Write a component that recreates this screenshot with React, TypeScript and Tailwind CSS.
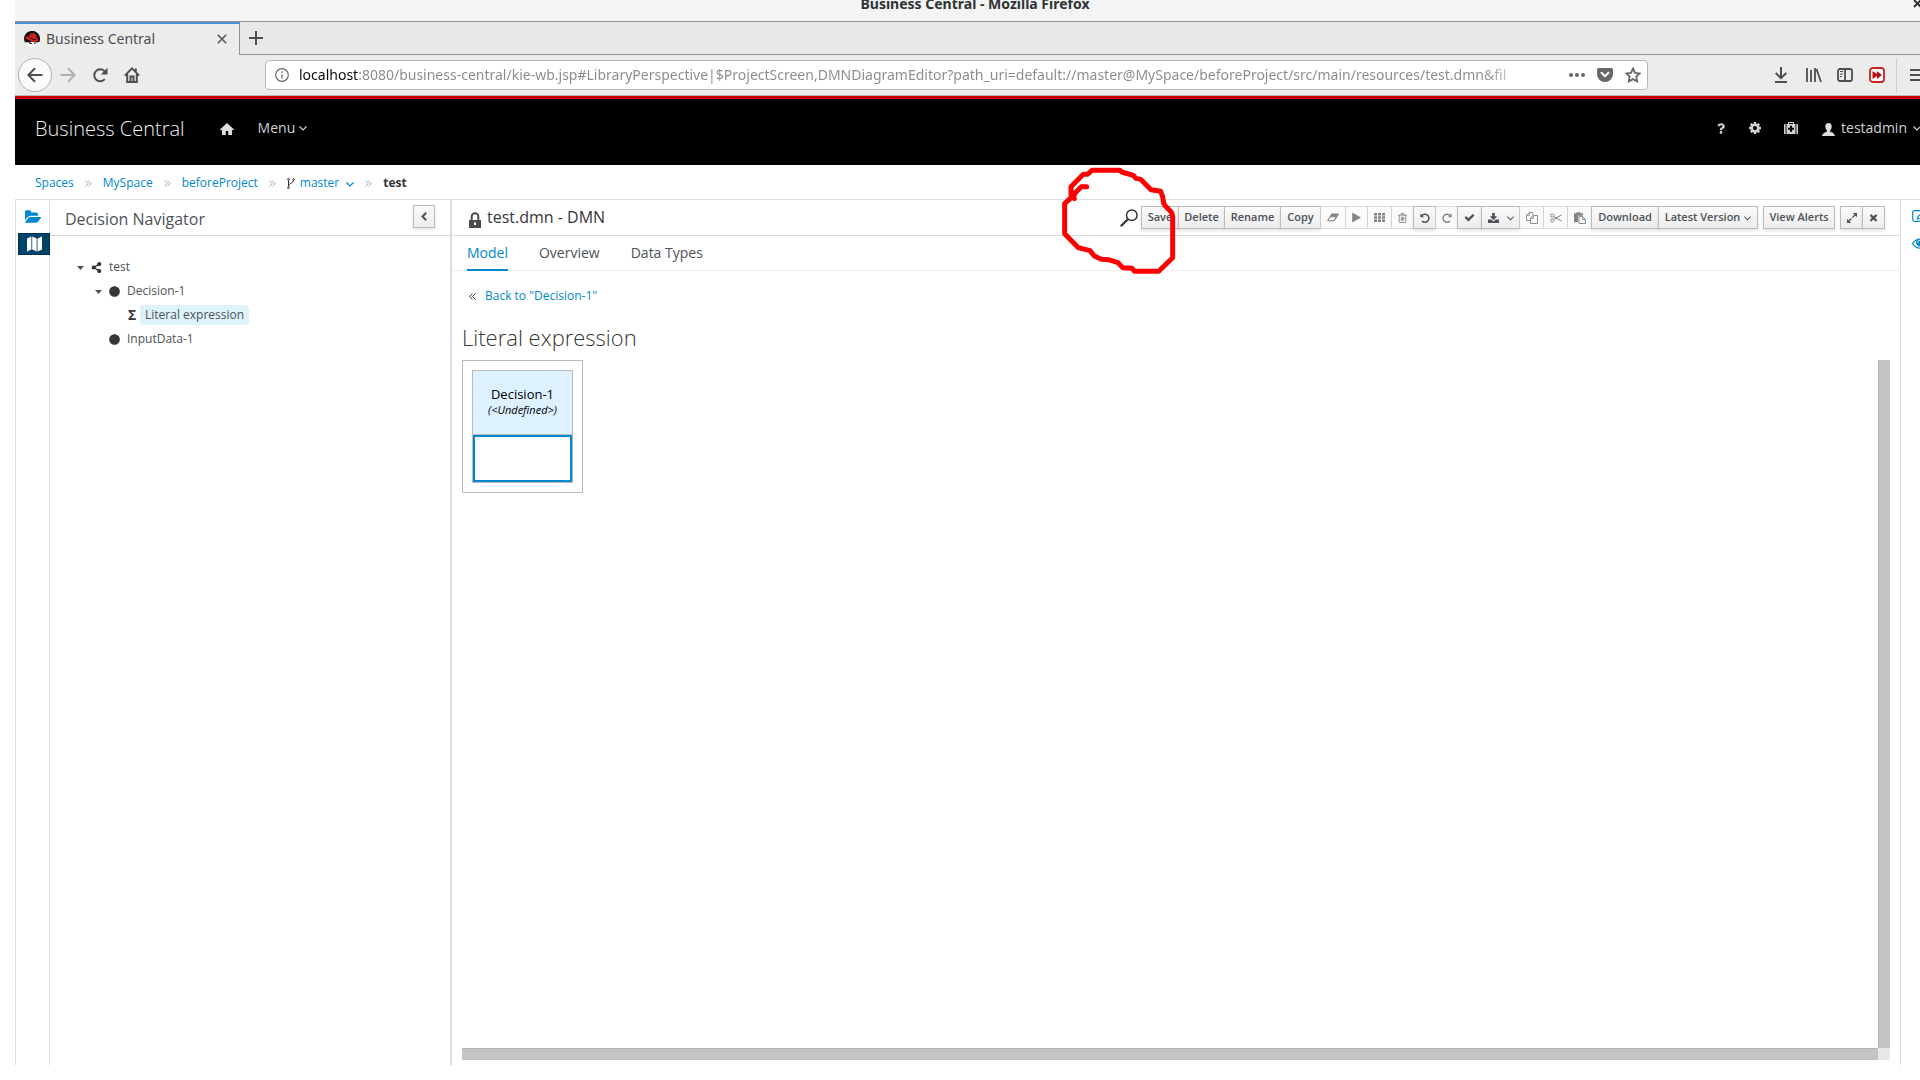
import type { ReactNode } from "react";
import { FaCircle, FaQuestion, FaShareAlt } from "react-icons/fa";

type IconProps = { className?: string };

// solid glyphs on the 1792 grid
const glyphs = {
  play: "M1576 927l-1328 738q-23 13-39.5 3t-16.5-36v-1472q0-26 16.5-36t39.5 3l1328 738q23 13 23 31t-23 31z",
  check:
    "M1671 566q0 40-28 68l-724 724-136 136q-28 28-68 28t-68-28l-136-136-362-362q-28-28-28-68t28-68l136-136q28-28 68-28t68 28l294 295 656-657q28-28 68-28t68 28l136 136q28 28 28 68z",
  times:
    "M1490 1322q0 40-28 68l-136 136q-28 28-68 28t-68-28l-294-294-294 294q-28 28-68 28t-68-28l-136-136q-28-28-28-68t28-68l294-294-294-294q-28-28-28-68t28-68l136-136q28-28 68-28t68 28l294 294 294-294q28-28 68-28t68 28l136 136q28 28 28 68t-28 68l-294 294 294 294q28 28 28 68z",
  eye: "M1664 960q-152-236-381-353 61 104 61 225 0 185-131.5 316.5t-316.5 131.5-316.5-131.5-131.5-316.5q0-121 61-225-229 117-381 353 133 205 333.5 326.5t434.5 121.5 434.5-121.5 333.5-326.5zm-720-384q0-20-14-34t-34-14q-125 0-214.5 89.5t-89.5 214.5q0 20 14 34t34 14 34-14 14-34q0-86 61-147t147-61q20 0 34-14t14-34zm848 384q0 34-20 69-140 230-376.5 368.5t-499.5 138.5-499.5-139-376.5-368q-20-35-20-69t20-69q140-229 376.5-368t499.5-139 499.5 139 376.5 368q20 35 20 69z",
  folderOpen:
    "M1815 952q0 31-31 66l-336 396q-43 51-120.5 86.5t-143.5 35.5h-1088q-34 0-60.5-13t-26.5-43q0-31 31-66l336-396q43-51 120.5-86.5t143.5-35.5h1088q34 0 60.5 13t26.5 43zm-343-344v160h-832q-94 0-197 47.5t-164 119.5l-337 396-5 6q0-4-.5-12.5t-.5-12.5v-960q0-92 66-158t158-66h320q92 0 158 66t66 158v32h544q92 0 158 66t66 158z",
  cog: "M1152 896q0-106-75-181t-181-75-181 75-75 181 75 181 181 75 181-75 75-181zm512-109v222q0 12-8 23t-20 13l-185 28q-19 54-39 91 35 50 107 138 10 12 10 25t-9 23q-27 37-99 108t-94 71q-12 0-26-9l-138-108q-44 23-91 38-16 136-29 186-7 28-36 28h-222q-14 0-24.5-8.5t-11.5-21.5l-28-184q-49-16-90-37l-141 107q-10 9-25 9-14 0-25-11-126-114-165-168-7-10-7-23 0-12 8-23 15-21 51-66.5t54-70.5q-27-50-41-99l-183-27q-13-2-21-12.5t-8-23.5v-222q0-12 8-23t19-13l186-28q14-46 39-92-40-57-107-138-10-12-10-24 0-10 9-23 26-36 98.5-107.5t94.5-71.5q13 0 26 10l138 107q44-23 91-38 16-136 29-186 7-28 36-28h222q14 0 24.5 8.5t11.5 21.5l28 184q49 16 90 37l142-107q9-9 24-9 13 0 25 10 129 119 165 170 7 8 7 22 0 12-8 23-15 21-51 66.5t-54 70.5q26 50 41 98l183 28q13 2 21 12.5t8 23.5z",
};

const Glyph = ({ name, className = "size-3" }: IconProps & { name: keyof typeof glyphs }) => (
  <svg viewBox="0 0 1792 1792" fill="currentColor" className={`shrink-0 ${className}`} aria-hidden="true">
    <path d={glyphs[name]} />
  </svg>
);

const Line = ({
  d,
  box = "0 0 16 16",
  width = 2,
  className = "size-4",
  children,
}: IconProps & { d?: string; box?: string; width?: number; children?: ReactNode }) => (
  <svg
    viewBox={box}
    fill="none"
    stroke="currentColor"
    strokeWidth={width}
    className={`shrink-0 ${className}`}
    aria-hidden="true"
  >
    {d && <path d={d} />}
    {children}
  </svg>
);

const ChevronDown = ({ className = "h-2 w-2" }: IconProps) => (
  <Line box="0 0 8 8" width={1.2} d="M.5 2.5 4 6l3.5-3.5" className={className} />
);

const Separator = () => (
  <Line box="0 0 7 7" width={0.9} d="M.6.6l2.7 2.9L.6 6.4M3.4.6l2.7 2.9-2.7 2.9" className="mx-[11px] size-[7px] text-gray-400" />
);

const MapIcon = () => (
  <svg viewBox="0 0 15 16" className="h-4 w-[15px]" aria-hidden="true">
    <path fill="#fff" d="M0 2.5 4.4.4v13L0 15.6zM5.2.4l4.5 2.1v13l-4.5-2.1zM10.5 2.5 15 .4v13l-4.5 2.2z" />
  </svg>
);

const Favicon = () => (
  <svg viewBox="0 0 16 16" className="size-4 shrink-0" aria-hidden="true">
    <circle cx="8" cy="8" r="8" fill="#fff" />
    <path fill="#111" d="M1 11.6A8 8 0 1 1 15.4 11l-3 .6-5-.9z" />
    <path fill="#d4201f" d="M1.4 6.2c1-.8 2.4-1 3.4-.8L6.3 2.4c.6-.6 1.6.3 2.7.1 1-.1 1.9-.5 2.6.5l1.3 4c1.6 1 2 2.6.7 3.3-2.2 1.2-5.8.3-8.5-1C3 8.3 1.2 7.3 1.4 6.2z" />
    <path stroke="#111" strokeWidth="1" fill="none" d="M5.3 6.4c1.5 1.6 4.5 2.3 6.9 2" />
    <path fill="#111" d="M4 10.5l3.5 1.6 1 1.2-3-.6zM9.5 12l3-.2-1.8 1.2z" />
  </svg>
);

type Tool = { label: string; text?: boolean; icon?: ReactNode; menu?: boolean; disabled?: boolean; width: string };

const tools: Tool[] = [
  { label: "Save", text: true, width: "w-[38px]" },
  { label: "Delete", text: true, width: "w-[47px]" },
  { label: "Rename", text: true, width: "w-[57px]" },
  { label: "Copy", text: true, width: "w-[41px]" },
  {
    label: "Clear",
    disabled: true,
    width: "w-[26px]",
    icon: (
      <svg viewBox="0 0 12 9" className="h-[9px] w-3" aria-hidden="true">
        <path fill="currentColor" fillRule="evenodd" d="M5 .5h6.3q.8.1.5.9L8 7.6q-.4.7-1.1.7H.7q-.8-.1-.5-.9L4 1.2Q4.4.5 5 .5zM6.7 7.3l1.9-3.1H3.5L1.5 7.3z" />
      </svg>
    ),
  },
  { label: "Run", disabled: true, width: "w-[23px]", icon: <Glyph name="play" className="size-[11px]" /> },
  {
    label: "Grid",
    disabled: true,
    width: "w-[25px]",
    icon: (
      <svg viewBox="0 0 11 9" className="h-[9px] w-[11px]" fill="currentColor" aria-hidden="true">
        <path d="M0 0h3v2.4H0zM4 0h3v2.4H4zM8 0h3v2.4H8zM0 3.3h3v2.4H0zM4 3.3h3v2.4H4zM8 3.3h3v2.4H8zM0 6.6h3V9H0zM4 6.6h3V9H4zM8 6.6h3V9H8z" />
      </svg>
    ),
  },
  {
    label: "Remove",
    disabled: true,
    width: "w-[23px]",
    icon: <Line box="0 0 9 10" width={0.9} d="M0 2.2h9M1.2 2.2v6.6q0 .7.7.7h5.2q.7 0 .7-.7V2.2M3 2V.6h3V2M3.2 3.8v4M4.5 3.8v4M5.8 3.8v4" className="h-[10px] w-[9px]" />,
  },
  {
    label: "Undo",
    width: "w-[23px]",
    icon: (
      <Line box="0 0 10 10" width={1.5} d="M1.6 3A4 4 0 1 1 2 7.9" className="size-[10px]">
        <path d="M.3.5v3.8h3.8z" fill="currentColor" stroke="none" />
      </Line>
    ),
  },
  {
    label: "Redo",
    disabled: true,
    width: "w-[23px]",
    icon: (
      <Line box="0 0 10 10" width={1.5} d="M8.4 3A4 4 0 1 0 8 7.9" className="size-[10px]">
        <path d="M9.7.5v3.8H5.9z" fill="currentColor" stroke="none" />
      </Line>
    ),
  },
  { label: "Validate", width: "w-[25px]", icon: <Glyph name="check" className="size-[11px]" /> },
  {
    label: "Export",
    menu: true,
    width: "w-[39px]",
    icon: (
      <svg viewBox="0 0 11 10" className="h-[10px] w-[11px]" fill="currentColor" aria-hidden="true">
        <path d="M4.2 0h2.6v3.3h2.4L5.5 7.2 1.8 3.3h2.4zM0 6.5h3.3l2.2 1.9 2.2-1.9H11V10H0z" />
      </svg>
    ),
  },
  {
    label: "Copy selection",
    disabled: true,
    width: "w-[25px]",
    icon: <Line box="0 0 12 12" width={0.9} d="M4.5 8.5h-4V3.3L3.3.5h3.4v3M.5 3.3h2.8V.5M4.5 6.3l2.8-2.8h4.2v8h-7zM4.5 6.3h2.8V3.5" className="size-3" />,
  },
  {
    label: "Cut selection",
    disabled: true,
    width: "w-[25px]",
    icon: (
      <Line box="0 0 12 10" width={1} d="M3.8 3.8 11.5 8M3.8 6.2 11.5 2" className="h-[10px] w-3">
        <ellipse cx="2.3" cy="2.5" rx="1.8" ry="1.5" />
        <ellipse cx="2.3" cy="7.5" rx="1.8" ry="1.5" />
      </Line>
    ),
  },
  {
    label: "Paste selection",
    disabled: true,
    width: "w-[25px]",
    icon: (
      <Line box="0 0 12 12" width={0.9} d="M5 4.5h3.5l3 3v4H5zM8.5 4.5v3h3" className="size-3">
        <path d="M0 1.2h2.5V.3h4v.9H9v2.5H4.2v6.5H0z" fill="currentColor" stroke="none" />
      </Line>
    ),
  },
  { label: "Download", text: true, width: "w-[68px]" },
  { label: "Latest Version", text: true, menu: true, width: "w-[100px]" },
];

const ToolButton = ({ tool }: { tool: Tool }) => (
  <button
    type="button"
    aria-label={tool.label}
    disabled={tool.disabled}
    className={`-ml-px flex h-[23px] shrink-0 items-center justify-center gap-1 border bg-gradient-to-b from-[#fafafa] text-[11px] font-semibold whitespace-nowrap text-[#4d5258] ${tool.width} ${
      tool.disabled ? "border-[#d0d0d0] to-[#fafafa] opacity-70" : "relative border-[#bbb] to-[#ededed] shadow-[0_2px_3px_rgba(3,3,3,0.1)]"
    }`}
  >
    {tool.text && tool.label}
    {tool.icon}
    {tool.menu && <ChevronDown className={tool.text ? "h-2 w-[7px]" : "ml-1 h-2 w-[7px]"} />}
  </button>
);

// freehand marker loop around the space left of the Save button
const MarkerLoop = () => (
  <svg
    viewBox="60 51 351 321"
    className="pointer-events-none absolute top-[-39px] left-[-60px] z-10 h-[107px] w-[117px]"
    fill="none"
    stroke="#f00"
    strokeWidth="15"
    strokeLinecap="round"
    strokeLinejoin="round"
    aria-hidden="true"
  >
    <path d="M140 110h-16l-24 24-5 5 8 7M93 138v-28l37-37h12l14-12h84l5 5 35 10 8 9 14 3 31 31 29 5 6 16 3 20 5 8 17 17 5 13v125l-42 41h-72l-8-9-28-2-14-15-29-9-21-1-21-10-13-16-35-9-41-42v-90l30-28" />
  </svg>
);

function TitleBar() {
  return (
    <div className="flex h-[21px] shrink-0 items-start bg-[#f4f4f4] font-['Noto_Sans','Open_Sans',sans-serif]">
      <span className="w-8" />
      <h1 className="-mt-2 flex-1 text-center text-sm leading-6 font-bold text-[#2e3436]">Business Central - Mozilla Firefox</h1>
      <button type="button" aria-label="Close window" className="w-8">
        <Line box="0 0 9 9" width={2} d="M1 1l7 7M8 1 1 8" className="-mt-px ml-[10px] size-[9px] text-[#2e3436]" />
      </button>
    </div>
  );
}

function BrowserTabs() {
  return (
    <div className="flex h-[34px] shrink-0 border-t border-[#939392] bg-[#e8e8e7] font-['Noto_Sans','Open_Sans',sans-serif]">
      <div className="flex w-[225px] items-center border-t-2 border-r border-t-[#4a90d9] border-r-[#939392] bg-[#ececeb] pr-3 pb-[2px] pl-[9px]">
        <Favicon />
        <span className="ml-[6px] flex-1 text-sm text-[#4c4f50]">Business Central</span>
        <button type="button" aria-label="Close tab">
          <Line box="0 0 10 10" width={1.6} d="M.8.8l8.4 8.4M9.2.8.8 9.2" className="size-[10px] text-[#55595a]" />
        </button>
      </div>
      <div className="flex flex-1 items-center border-b border-[#939392] pl-[9px]">
        <button type="button" aria-label="New tab">
          <Line box="0 0 14 14" d="M7 0v14M0 7h14" className="size-[14px] text-[#4c4f50]" />
        </button>
      </div>
    </div>
  );
}

function AddressBar() {
  return (
    <div className="flex h-[41px] shrink-0 items-center border-b border-[#b6b6b6] bg-[#ececeb] font-['Noto_Sans','Open_Sans',sans-serif] text-[#4c4f50]">
      <button type="button" aria-label="Back" className="ml-[3px] flex size-[34px] items-center justify-center rounded-full border border-[#b0b0b0] bg-[#fbfbfb]">
        <Line d="M15.5 8H1.5M8 1.2 1.3 8 8 14.8" />
      </button>
      <button type="button" aria-label="Forward" className="ml-2 text-[#b0b1b1]">
        <Line d="M.5 8h14M8 1.2 14.7 8 8 14.8" />
      </button>
      <button type="button" aria-label="Reload" className="ml-4">
        <Line d="M12.8 12.2A6 6 0 1 1 12.5 4">
          <path d="M15.5.8v6.7H8.8z" fill="currentColor" stroke="none" />
        </Line>
      </button>
      <button type="button" aria-label="Home" className="ml-4">
        <Line d="M.8 8.6 8 1.4l7.2 7.2M3.2 7v8h9.6V7M11.8 1.5v3">
          <path d="M6.5 15V9.5h3V15" />
        </Line>
      </button>
      <label className="ml-[125px] flex h-[30px] min-w-0 flex-1 items-center rounded-sm border border-[#b6b6b6] bg-white pr-[6px] pl-[9px]">
        <Line box="0 0 14 14" width={1.2} d="M7 6.2v4.2M7 3.3V5" className="size-[14px] text-[#666]">
          <circle cx="7" cy="7" r="6.3" />
        </Line>
        <input
          type="text"
          aria-label="Address"
          defaultValue="localhost:8080/business-central/kie-wb.jsp#LibraryPerspective|$ProjectScreen,DMNDiagramEditor?path_uri=default://master@MySpace/beforeProject/src/main/resources/test.dmn&fil"
          className="ml-[10px] min-w-0 flex-1 bg-[linear-gradient(to_right,#0c0c0d_60px,#8a8a8a_60px,#8a8a8a_calc(100%_-_50px),transparent)] bg-clip-text text-sm text-transparent outline-none"
        />
        <button type="button" aria-label="Page actions" className="ml-9">
          <svg viewBox="0 0 16 4" className="h-1 w-4" fill="#666" aria-hidden="true">
            <circle cx="2" cy="2" r="2" />
            <circle cx="8" cy="2" r="2" />
            <circle cx="14" cy="2" r="2" />
          </svg>
        </button>
        <button type="button" aria-label="Save to Pocket" className="ml-3">
          <svg viewBox="0 0 16 14" className="h-[14px] w-4" aria-hidden="true">
            <path fill="#666" d="M1.5 0h13Q16 0 16 1.5V6a8 8 0 0 1-16 0V1.5Q0 0 1.5 0z" />
            <path stroke="#fff" strokeWidth="2" strokeLinecap="round" strokeLinejoin="round" fill="none" d="M4.500 4.800 8 8.200l3.500-3.400" />
          </svg>
        </button>
        <button type="button" aria-label="Bookmark this page" className="ml-3 text-[#666]">
          <Line width={1.8} d="M8 1.500l2 4.300 4.700.6-3.400 3.200.9 4.800L8 12.100l-4.200 2.300.9-4.800L1.300 6.400 6 5.800z" />
        </button>
      </label>
      <button type="button" aria-label="Downloads" className="ml-[127px]">
        <Line box="0 0 12 16" d="M6 0v11M.7 6 6 11.2 11.3 6M0 15h12" className="h-4 w-3" />
      </button>
      <button type="button" aria-label="Library" className="ml-[19px]">
        <Line d="M1 1v14M5 3v12M9 1v14M10.5 2l4.5 13" width={1.8} />
      </button>
      <button type="button" aria-label="Sidebars" className="ml-[15px]">
        <Line width={1.8} d="M8 2v12">
          <rect x="1" y="2" width="14" height="12" rx="2" />
          <path d="M3 4.500h3M3 7h3M3 9.500h2" strokeWidth="1" />
        </Line>
      </button>
      <button type="button" aria-label="Fast forward" className="ml-4">
        <svg viewBox="0 0 16 16" className="size-4" aria-hidden="true">
          <rect x="1" y="1" width="14" height="14" rx="3" fill="#fff" stroke="#c22" strokeWidth="1.8" />
          <path fill="#b11" d="M3.500 4 8 7V4l5 4-5 4V9l-4.500 3z" />
        </svg>
      </button>
      <span className="ml-[11px] h-[34px] w-px bg-[#cfcfce]" />
      <button type="button" aria-label="Open menu" className="mr-[10px] ml-[13px]">
        <Line box="0 0 15 14" d="M0 2h15M0 7h15M0 12h15" className="h-[14px] w-[15px]" />
      </button>
    </div>
  );
}

function AppHeader() {
  return (
    <header className="flex h-[69px] shrink-0 items-center border-t-3 border-[#c00] bg-black pr-[14px] pb-2 pl-5 text-[#d1d1d1]">
      <span className="pt-[2px] text-xl font-light text-[#eee]">Business Central</span>
      <button type="button" aria-label="Home" className="ml-[35px]">
        <svg viewBox="0 0 14 12" className="mt-px h-3 w-[14px]" fill="#ddd" aria-hidden="true">
          <path d="M7 0 0 6.5 .7 7.4 2 6.8V12h3.8V8h2.400v4H12V6.800l1.300.6.700-.9z" />
        </svg>
      </button>
      <button type="button" className="ml-6 flex items-center gap-1 text-sm">
        Menu <ChevronDown />
      </button>
      <div className="ml-auto flex items-center">
        <button type="button" aria-label="Help">
          <FaQuestion className="h-[11px] w-2" />
        </button>
        <button type="button" aria-label="Settings" className="ml-[23px]">
          <Glyph name="cog" className="size-[14px]" />
        </button>
        <button type="button" aria-label="Apps" className="ml-[22px]">
          <svg viewBox="0 0 14 12" className="h-3 w-[14px]" fill="currentColor" aria-hidden="true">
            <path d="M0 2.500Q0 2 .8 2H1.600v10H.8Q0 12 0 11.500zM14 2.500Q14 2 13.200 2h-.8v10h.8q.8 0 .8-.5z" />
            <path fillRule="evenodd" d="M2.500 2H4V.8Q4 0 4.800 0h4.400Q10 0 10 .8V2h1.500v10h-9zM5 2h4V1H5zM6 3.800v2H4v2h2v2h2v-2h2v-2H8v-2z" />
          </svg>
        </button>
        <button type="button" className="ml-6 flex items-center text-sm">
          <svg viewBox="0 0 13 13" className="mt-[2px] mr-[6px] size-[13px]" fill="#ddd" aria-hidden="true">
            <path d="M6.500 0C8.500 0 9.700 1.400 9.700 3.500c0 1.700-.7 3-1.500 3.800v1.400c2 .8 4.200 1.400 4.800 4.300H0c.6-2.900 2.800-3.500 4.800-4.300V7.300C4 6.500 3.300 5.200 3.300 3.500 3.300 1.400 4.500 0 6.500 0z" />
          </svg>
          testadmin
          <ChevronDown className="ml-[6px] size-2" />
        </button>
      </div>
    </header>
  );
}

function Breadcrumbs() {
  return (
    <nav aria-label="Breadcrumb" className="flex h-[34px] shrink-0 items-center pt-[2px] pl-5 text-xs text-[#0088ce]">
      <a href="#spaces">Spaces</a>
      <Separator />
      <a href="#myspace">MySpace</a>
      <Separator />
      <a href="#project">beforeProject</a>
      <Separator />
      <button type="button" className="flex items-center">
        <Line box="0 0 8 11" width={1} d="M1.5 2v7M6.5 2.5C6.5 5.5 1.5 5 1.5 8" className="mr-[5px] h-[11px] w-2 text-[#363636]">
          <circle cx="1.5" cy="1.3" r=".9" />
          <circle cx="1.5" cy="9.7" r=".9" />
          <circle cx="6.5" cy="1.6" r=".9" />
        </Line>
        master
        <ChevronDown className="mt-px ml-[7px] size-2" />
      </button>
      <Separator />
      <strong className="font-bold text-[#363636]">test</strong>
    </nav>
  );
}

const Caret = () => (
  <svg viewBox="0 0 7 4" className="mt-px h-1 w-[7px]" fill="currentColor" aria-hidden="true">
    <path d="M0 0h7L3.5 4z" />
  </svg>
);

function DecisionNavigator() {
  return (
    <aside className="w-[400px] shrink-0">
      <div className="flex h-9 items-center justify-between border-b border-[#dcdcdc] px-[15px]">
        <h2 className="pt-[2px] text-base leading-6 text-[#4d5258]">Decision Navigator</h2>
        <button
          type="button"
          aria-label="Collapse"
          className="mb-[2px] flex h-[23px] w-[22px] items-center justify-center border border-[#bbb] bg-gradient-to-b from-[#fafafa] to-[#ededed] text-[#4d5258] shadow-[0_2px_3px_rgba(3,3,3,0.1)]"
        >
          <Line box="0 0 6 9" width={2} d="M5.2.8 1.5 4.5l3.700 3.700" className="h-[9px] w-[6px]" />
        </button>
      </div>
      <ul className="mt-[19px] text-xs leading-6 text-[#4d5258]">
        <li className="flex h-6 items-center pl-[27px]">
          <Caret />
          <FaShareAlt className="mr-[7px] ml-[7px] size-[11px] text-[#363636]" />
          test
        </li>
        <li className="flex h-6 items-center pl-[45px]">
          <Caret />
          <FaCircle className="mr-[7px] ml-[7px] size-[11px] text-[#363636]" />
          Decision-1
        </li>
        <li className="flex h-6 items-center pl-[78px]">
          <span className="w-3 text-sm font-bold text-[#363636]">Σ</span>
          <span className="rounded-[3px] bg-[#def3f9] px-[5px] leading-5">Literal expression</span>
        </li>
        <li className="flex h-6 items-center pl-[59px]">
          <FaCircle className="mr-[7px] size-[11px] text-[#363636]" />
          InputData-1
        </li>
      </ul>
    </aside>
  );
}

function EditorToolbar() {
  return (
    <div className="flex h-9 shrink-0 items-center border-b border-[#dcdcdc] pr-[15px] pl-[17px]">
      <Line box="0 0 12 16" d="M2.7 8V4.5a3.3 3.3 0 0 1 6.6 0V8" className="mt-1 h-4 w-3 text-[#4d4d4d]">
        <path d="M0 8h12v8H0zM5 10.500v2.500h2v-2.500z" fill="currentColor" fillRule="evenodd" stroke="none" />
      </Line>
      <h2 className="ml-[6px] pb-[2px] text-base leading-6 text-[#363636]">test.dmn - DMN</h2>
      <div className="relative ml-auto flex items-center">
        <MarkerLoop />
        <button type="button" aria-label="Search" className="mr-1">
          <Line box="0 0 18 18" width={1.5} className="size-[18px] text-[#333]">
            <circle cx="11.8" cy="6.2" r="5.3" />
            <path d="M7.8 10.2.8 17.2" strokeWidth="2.2" />
          </Line>
        </button>
        {tools.map((tool) => (
          <ToolButton key={tool.label} tool={tool} />
        ))}
        <span className="w-[6px]" />
        <ToolButton tool={{ label: "View Alerts", text: true, width: "w-[72px]" }} />
        <span className="w-[6px]" />
        <ToolButton
          tool={{
            label: "Maximize",
            width: "w-[23px]",
            icon: (
              <Line box="0 0 10 10" width={1.3} d="M1 9l3.5-3.5M5.5 4.5 9 1" className="size-[10px]">
                <path d="M10 0v4.2L5.8 0zM0 10V5.8L4.2 10z" fill="currentColor" stroke="none" />
              </Line>
            ),
          }}
        />
        <ToolButton tool={{ label: "Close", width: "w-[23px]", icon: <Glyph name="times" className="size-[11px]" /> }} />
      </div>
    </div>
  );
}

function Editor() {
  return (
    <main className="flex min-w-0 flex-1 flex-col">
      <EditorToolbar />
      <div role="tablist" className="flex h-[35px] shrink-0 gap-[31px] border-b border-[#ededec] pl-[15px] text-sm text-[#4d5258]">
        <button type="button" role="tab" aria-selected="true" className="-mb-px border-b-2 border-[#0088ce] text-[#0088ce]">
          Model
        </button>
        <button type="button" role="tab" aria-selected="false">Overview</button>
        <button type="button" role="tab" aria-selected="false">Data Types</button>
      </div>
      <div className="flex min-h-0 flex-1 flex-col px-[10px] pb-[5px]">
        <div className="mt-[15px] flex items-center pl-[7px] text-xs leading-5">
          <Line box="0 0 7 7" width={1} d="M3.4.6.7 3.5l2.7 2.9M6.3.6 3.6 3.5l2.7 2.9" className="size-[7px] text-[#363636]" />
          <a href="#decision-1" className="ml-[9px] text-[#0088ce]">Back to "Decision-1"</a>
        </div>
        <h3 className="mt-[17px] mb-[9px] text-[22px] leading-7 font-light text-[#363636]">Literal expression</h3>
        <div className="grid min-h-0 flex-1 grid-cols-[1fr_12px] grid-rows-[1fr_12px]">
          <div>
            <table className="border-separate border-spacing-[9px] border border-[#bbb] text-black">
              <tbody>
                <tr>
                  <td className="p-0">
                    <div className="w-[101px] border border-[#bbb]">
                      <div className="flex h-[63px] flex-col items-center justify-center bg-[#def1ff] pb-[2px]">
                        <span className="text-[13px] leading-4">Decision-1</span>
                        <span className="text-[11px] leading-4 italic">(&lt;Undefined&gt;)</span>
                      </div>
                      <div className="border-t border-[#bbb]">
                        <input type="text" aria-label="Literal expression" className="block h-[47px] w-full border-2 border-[#0088ce] px-1 text-xs outline-none" />
                      </div>
                    </div>
                  </td>
                </tr>
              </tbody>
            </table>
          </div>
          <div className="border-l border-[#b2b2b1] bg-[#c3c4c3]" />
          <div className="border-t border-[#b2b2b1] bg-[#c3c4c3]" />
          <div className="bg-[#e8e8e7]" />
        </div>
      </div>
    </main>
  );
}

export default function App() {
  return (
    <div className="h-screen overflow-hidden bg-white pb-[15px] font-['Open_Sans','Noto_Sans',sans-serif]">
      <div className="ml-[15px] flex h-full w-full flex-col">
        <TitleBar />
        <BrowserTabs />
        <AddressBar />
        <AppHeader />
        <Breadcrumbs />
        <div className="flex min-h-0 flex-1 border-t border-[#dcdcdc]">
          <div className="flex w-[35px] shrink-0 flex-col border-x border-[#dcdcdc]">
            <button type="button" aria-label="Project explorer" className="flex h-[33px] items-center justify-center text-[#0088ce]">
              <Glyph name="folderOpen" className="size-4" />
            </button>
            <button type="button" aria-label="Decision navigator" className="-mr-px ml-[2px] flex h-[22px] items-center justify-center border border-[#00324f] bg-[#004368]">
              <MapIcon />
            </button>
          </div>
          <DecisionNavigator />
          <div className="w-[2px] shrink-0 bg-[#dcdcdc]" />
          <Editor />
          <div className="flex w-[35px] shrink-0 flex-col items-start border-l border-[#dcdcdc] pl-[11px] text-[#0088ce]">
            <button type="button" aria-label="Properties" className="mt-[10px]">
              <Line box="0 0 16 12" width={1.2} d="M13 .7H2.5Q.7.7.7 2.5v7q0 1.8 1.8 1.8h10q1.8 0 1.8-1.8V7M5.500 9l.5-2.500L12.500 1l2 2L8 8.500z" className="h-3 w-4" />
            </button>
            <button type="button" aria-label="Preview" className="mt-[13px]">
              <Glyph name="eye" className="size-4" />
            </button>
          </div>
        </div>
      </div>
    </div>
  );
}
